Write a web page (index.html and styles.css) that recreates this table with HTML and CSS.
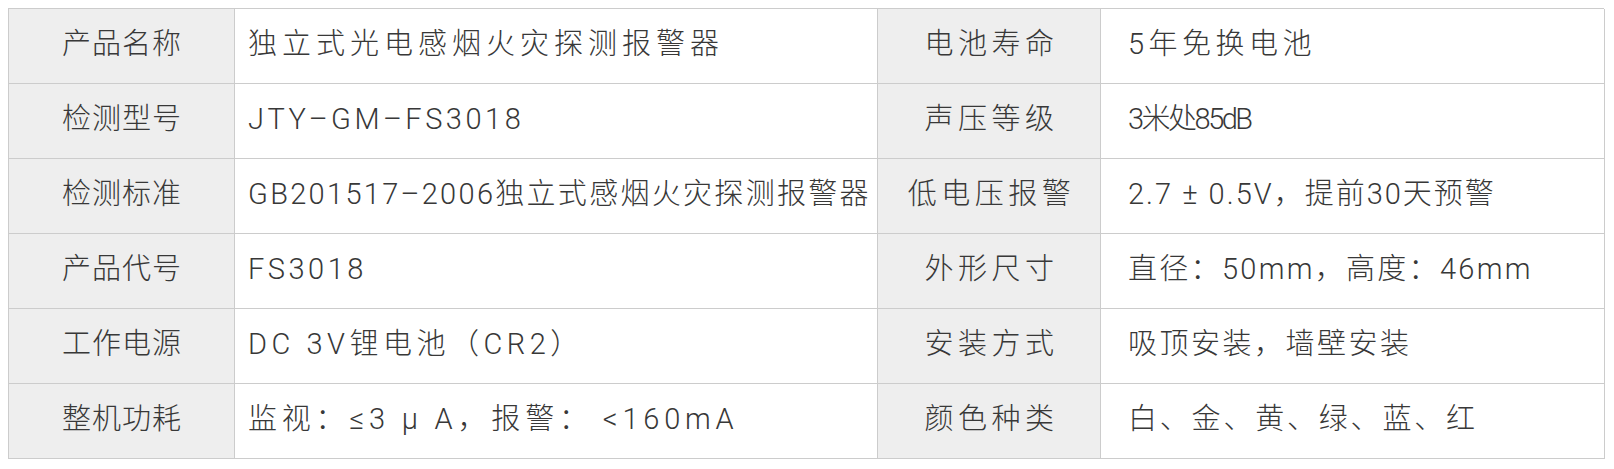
FILE: index.html
```html
<!DOCTYPE html>
<html lang="zh-CN">
<head>
<meta charset="utf-8">
<title>产品参数</title>
<link rel="stylesheet" href="styles.css">
</head>
<body>
<div class="spec">
  <div class="cell lbl">产品名称</div>
  <div class="cell val v1 ls5">独立式光电感烟火灾探测报警器</div>
  <div class="cell lbl lbl-r">电池寿命</div>
  <div class="cell val v2 ls45">5年免换电池</div>

  <div class="cell lbl">检测型号</div>
  <div class="cell val v1 ls35">JTY–GM–FS3018</div>
  <div class="cell lbl lbl-r">声压等级</div>
  <div class="cell val v2 lsneg">3米处85dB</div>

  <div class="cell lbl">检测标准</div>
  <div class="cell val v1 ls23">GB201517–2006独立式感烟火灾探测报警器</div>
  <div class="cell lbl lbl-r">低电压报警</div>
  <div class="cell val v2 ls2">2.7 ± 0.5V，提前30天预警</div>

  <div class="cell lbl">产品代号</div>
  <div class="cell val v1 ls35">FS3018</div>
  <div class="cell lbl lbl-r">外形尺寸</div>
  <div class="cell val v2 ls23">直径：50mm，高度：46mm</div>

  <div class="cell lbl">工作电源</div>
  <div class="cell val v1 ls45">DC 3V锂电池（CR2）</div>
  <div class="cell lbl lbl-r">安装方式</div>
  <div class="cell val v2">吸顶安装，墙壁安装</div>

  <div class="cell lbl">整机功耗</div>
  <div class="cell val v1 ls48">监视：≤3 μ A，报警：<span class="lt">&lt;</span> 160mA</div>
  <div class="cell lbl lbl-r">颜色种类</div>
  <div class="cell val v2 ls28">白、金、黄、绿、蓝、红</div>
</div>
</body>
</html>
```
FILE: styles.css
```css
html, body {
  margin: 0;
  padding: 0;
  background: #ffffff;
}

body {
  padding: 8px;
  font-family: "Roboto", "Liberation Sans", "Noto Sans CJK SC", sans-serif;
  font-weight: 300;
  color: #383838;
}

.spec {
  display: grid;
  grid-template-columns: 226px 643px 223px 504px;
  grid-auto-rows: 75px;
  width: 1596px;
  border-top: 1px solid #cccccc;
  border-left: 1px solid #cccccc;
  box-sizing: border-box;
}

.cell {
  box-sizing: border-box;
  display: flex;
  align-items: center;
  border-right: 1px solid #cccccc;
  border-bottom: 1px solid #cccccc;
  font-size: 29px;
  line-height: 29px;
  padding-bottom: 4px;
  white-space: nowrap;
  letter-spacing: 2.5px;
}

.lbl {
  background: #eeeeee;
  justify-content: center;
  letter-spacing: 1px;
  padding-left: 1px;
}

.lbl-r {
  letter-spacing: 4.5px;
  padding-left: 5px;
}

.val {
  background: #ffffff;
}

.v1 {
  padding-left: 13px;
}

.v2 {
  padding-left: 27px;
}

.lt {
  padding-left: 10px;
}

.ls5 { letter-spacing: 5px; }
.ls48 { letter-spacing: 4.8px; }
.ls45 { letter-spacing: 4.5px; }
.ls35 { letter-spacing: 3.5px; }
.ls28 { letter-spacing: 2.8px; }
.ls23 { letter-spacing: 2.3px; }
.ls2 { letter-spacing: 2px; }
.lsneg { letter-spacing: -2.5px; }
```
